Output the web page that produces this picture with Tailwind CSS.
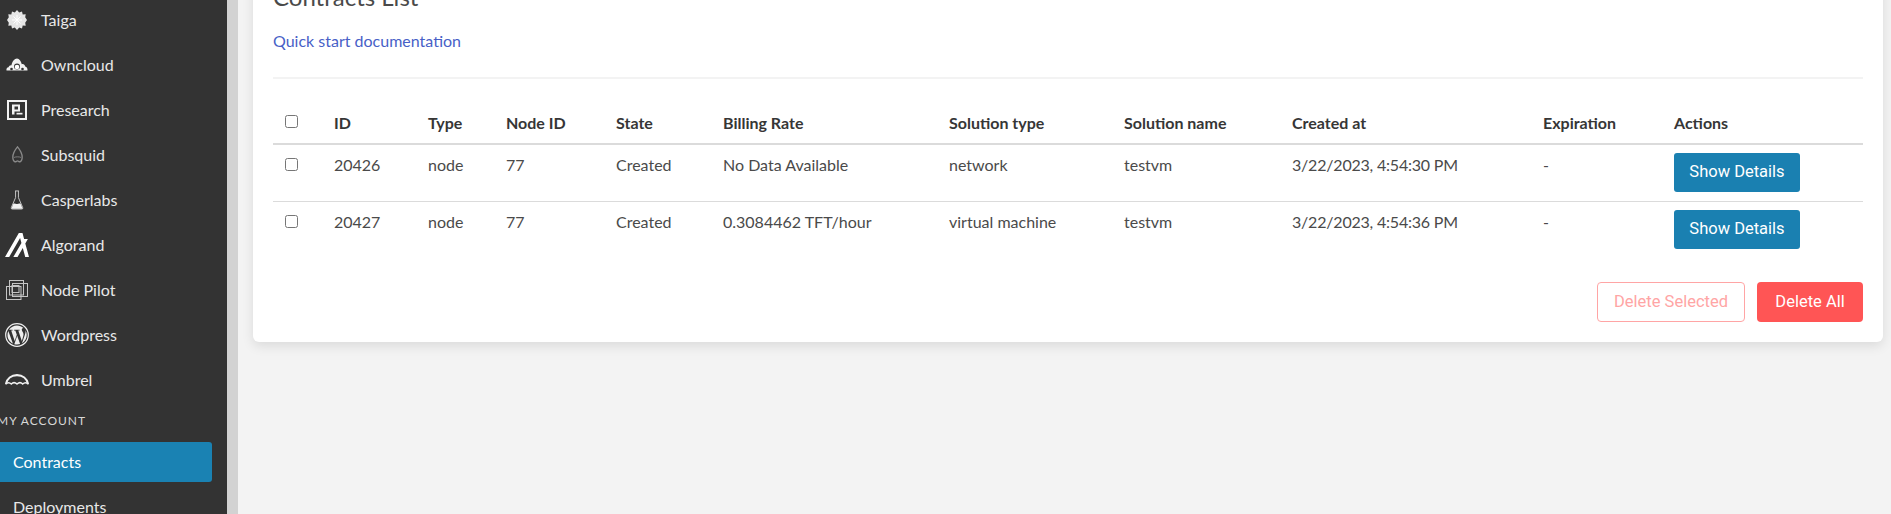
<!doctype html>
<html lang="en">
<head>
<meta charset="utf-8" />
<title>Contracts List</title>
<script src="https://cdn.jsdelivr.net/npm/@tailwindcss/browser@4"></script>
</head>
<body class="bg-[#f3f3f3] font-['Lato',sans-serif] h-screen overflow-hidden">
<div class="flex h-[514px] overflow-hidden">

  <!-- sidebar -->
  <aside class="w-[238px] shrink-0 h-full overflow-hidden bg-[#333333] border-r-[11px] border-[#d2d2d2] text-[#e8e8e8] text-[16px]">
    <nav class="-mt-[3px] flex flex-col">
      <a href="#" class="h-[45px] flex items-center">
        <span class="w-[34px] mr-[7px] flex justify-center">
          <svg width="20" height="20" viewBox="0 0 20 20" fill="#e6e6e6"><path d="M10 0l2.200 2.600L15 1.400l.7 3 3-.1-.5 3L20 10l-1.800 2.700.5 3-3-.1-.7 3-2.800-1.200L10 20l-2.200-2.600L5 18.600l-.7-3-3 .1.500-3L0 10l1.800-2.700-.5-3 3 .1.700-3 2.800 1.200z"/><path d="M10 5v10M5 10h10M6.500 6.500l7 7M13.500 6.500l-7 7" stroke="#fff" stroke-width="1"/></svg>
        </span>Taiga</a>
      <a href="#" class="h-[45px] flex items-center">
        <span class="w-[34px] mr-[7px] flex justify-center">
          <svg width="22" height="13" viewBox="0 0 22 13" fill="#f0f0f0"><path d="M.5 12.500c-.3-1.800.5-3 2-3.200C3 7.800 4.200 7 5.500 7.300 6 3.500 8.500.5 11 .5c2.300 0 4 2.500 4.800 5.700 1.700-.5 3 .6 3.400 2.400 1.500.1 2.500 2 2.300 3.900z"/><circle cx="11" cy="8.500" r="3" fill="#333"/><circle cx="11" cy="9" r="2.300" fill="#fff"/><circle cx="5.500" cy="11" r="1.300" fill="#333"/><circle cx="16.500" cy="11" r="1.300" fill="#333"/></svg>
        </span>Owncloud</a>
      <a href="#" class="h-[45px] flex items-center">
        <span class="w-[34px] mr-[7px] flex justify-center">
          <svg width="20" height="20" viewBox="0 0 20 20"><rect x="1" y="1" width="18" height="18" fill="#333" stroke="#f2f2f2" stroke-width="2"/><path d="M5 4.500h8v7H7.500v3H5z" fill="#f2f2f2"/><rect x="7.500" y="6.500" width="3.500" height="3" fill="#333"/><rect x="9.500" y="12.800" width="6" height="1.700" fill="#f2f2f2"/></svg>
        </span>Presearch</a>
      <a href="#" class="h-[45px] flex items-center">
        <span class="w-[34px] mr-[7px] flex justify-center">
          <svg width="13" height="17" viewBox="0 0 14 20" fill="none" stroke="#8a8a8a" stroke-width="1.600"><path d="M7 1C4.500 4 1.500 9 1.500 13c0 2 .8 5 2.500 5.500 1.200.3 2-1 3-1s1.800 1.300 3 1c1.700-.5 2.500-3.500 2.500-5.500C12.500 9 9.500 4 7 1z"/><path d="M3 13.500c1.500-1 6.500-1 8 0" stroke-width="1"/></svg>
        </span>Subsquid</a>
      <a href="#" class="h-[45px] flex items-center">
        <span class="w-[34px] mr-[7px] flex justify-center">
          <svg width="14" height="20" viewBox="0 0 14 21" fill="none" stroke="#c8c8c8" stroke-width="1"><path d="M5 1h4M5.500 1v7L1 18.500c-.3.800.2 1.500 1 1.500h10c.8 0 1.300-.7 1-1.500L8.500 8V1"/><path d="M3.200 14.500c1.500-1 2.500.6 4 .2s2-.9 3.500-.2l2.300 5.300H1z" fill="#f2f2f2" stroke="none"/></svg>
        </span>Casperlabs</a>
      <a href="#" class="h-[45px] flex items-center">
        <span class="w-[34px] mr-[7px] flex justify-center">
          <svg width="24" height="24" viewBox="0 0 24 24" fill="#fff"><path d="M23.980 23.990h-3.750l-2.440-9.070-5.250 9.070H8.340l8.100-14.040L15.100 5.020 4.200 23.990H.02L13.830 0h3.660l1.600 5.920h3.770l-2.570 4.470 3.690 13.600z"/></svg>
        </span>Algorand</a>
      <a href="#" class="h-[45px] flex items-center">
        <span class="w-[34px] mr-[7px] flex justify-center">
          <svg width="22" height="20" viewBox="0 0 22 20" fill="none" stroke="#c4c4c4" stroke-width="1"><rect x=".5" y="6.500" width="14.500" height="13"/><rect x="3.500" y=".5" width="14" height="14.500"/><rect x="6.500" y="3.500" width="15" height="13"/><rect x="6" y="5.500" width="7" height="7"/></svg>
        </span>Node Pilot</a>
      <a href="#" class="h-[45px] flex items-center">
        <span class="w-[34px] mr-[7px] flex justify-center">
          <svg width="24" height="24" viewBox="0 0 24 24"><circle cx="12" cy="12" r="11.300" fill="none" stroke="#eee" stroke-width="1.200"/><path d="M2.500 12c0 3.800 2.200 7 5.400 8.600L3.300 8.100c-.5 1.200-.8 2.500-.8 3.900zm16-.5c0-1.200-.4-2-.8-2.600-.5-.8-.9-1.400-.9-2.200 0-.8.6-1.600 1.500-1.600h.1C16.700 3.500 14.500 2.500 12 2.500c-3.300 0-6.200 1.700-7.900 4.300h.6c1 0 2.500-.1 2.500-.1.500 0 .6.700.1.800 0 0-.5.100-1.100.1l3.500 10.400 2.100-6.300-1.500-4.100c-.5 0-1-.1-1-.1-.5 0-.5-.8 0-.8 0 0 1.600.1 2.500.1 1 0 2.500-.1 2.500-.1.500 0 .6.700.1.800 0 0-.5.100-1.100.1l3.500 10.300 1-3.200c.4-1.300.7-2.300.7-3.100zm-6.300 1.300l-2.900 8.400c.9.300 1.800.4 2.700.4 1.100 0 2.200-.2 3.200-.5l-.1-.1zm8.300-5.500c0 .3.100.7.100 1 0 1-.2 2.100-.7 3.500l-2.900 8.400c2.800-1.600 4.700-4.700 4.700-8.200 0-1.700-.4-3.300-1.200-4.700z" fill="#eee"/></svg>
        </span>Wordpress</a>
      <a href="#" class="h-[45px] flex items-center">
        <span class="w-[34px] mr-[7px] flex justify-center">
          <svg width="24" height="11" viewBox="0 0 24 11" fill="none" stroke="#f0f0f0" stroke-width="2.200"><path d="M1 10C2 4.500 6.500 1.100 12 1.100S22 4.500 23 10"/><path d="M.5 10.300c2-2 4-2 5.800-.3 1.700-1.700 3.800-1.700 5.700 0 1.900-1.700 4-1.700 5.700 0 1.800-1.700 3.800-1.700 5.800.3" stroke-width="1.500"/></svg>
        </span>Umbrel</a>
    </nav>
    <p class="-ml-[3px] mt-[11px] h-[16px] leading-[16px] text-[12px] tracking-[1px] uppercase text-[#d8d8d8]">My Account</p>
    <div class="mt-[13px] w-[212px] h-[40px] flex items-center pl-[13px] rounded-r-[3px] bg-[#1a82b3] text-white">Contracts</div>
    <a href="#" class="block pl-[13px] mt-[13px] leading-[24px]">Deployments</a>
  </aside>

  <!-- main -->
  <main class="flex-1 min-w-0 pl-[15px] pr-[8px] h-full overflow-hidden">
    <section class="-mt-[40px] bg-white rounded-[6px] shadow-[0_4px_12px_rgba(0,0,0,0.10)] px-[20px] pt-[21px] pb-[20px] text-[#4a4a4a]">
      <h1 class="text-[24px] leading-[32px]">Contracts List</h1>
      <a href="#" class="block mt-[16px] text-[16px] leading-[24px] text-[#485fc7]">Quick start documentation</a>
      <hr class="mt-[24px] h-[2px] border-0 bg-[#f3f3f3]" />

      <table class="mt-[26px] w-[1590px] table-fixed text-[16px] text-left border-collapse">
        <thead class="text-[#363636]">
          <tr class="h-[39px] border-b-2 border-[#dbdbdb] font-bold">
            <th class="w-[49px] px-3 pb-[5px]"><input type="checkbox" class="block" /></th>
            <th class="w-[94px] px-3 pb-[2px]">ID</th>
            <th class="w-[78px] px-3 pb-[2px]">Type</th>
            <th class="w-[110px] px-3 pb-[2px]">Node ID</th>
            <th class="w-[107px] px-3 pb-[2px]">State</th>
            <th class="w-[226px] px-3 pb-[2px]">Billing Rate</th>
            <th class="w-[175px] px-3 pb-[2px]">Solution type</th>
            <th class="w-[168px] px-3 pb-[2px]">Solution name</th>
            <th class="w-[251px] px-3 pb-[2px]">Created at</th>
            <th class="w-[131px] px-3 pb-[2px]">Expiration</th>
            <th class="w-[201px] px-3 pb-[2px]">Actions</th>
          </tr>
        </thead>
        <tbody>
          <tr class="h-[57px] border-b border-[#dbdbdb] align-top">
            <td class="px-3 pt-[13px]"><input type="checkbox" class="block" /></td>
            <td class="px-3 pt-[8px]">20426</td>
            <td class="px-3 pt-[8px]">node</td>
            <td class="px-3 pt-[8px]">77</td>
            <td class="px-3 pt-[8px]">Created</td>
            <td class="px-3 pt-[8px]">No Data Available</td>
            <td class="px-3 pt-[8px]">network</td>
            <td class="px-3 pt-[8px]">testvm</td>
            <td class="px-3 pt-[8px] tracking-[-0.2px]">3/22/2023, 4:54:30 PM</td>
            <td class="px-3 pt-[8px]">-</td>
            <td class="px-3 pt-[8px]"><button class="w-[126px] h-[39px] rounded-[3px] bg-[#1a80b1] text-white text-[16.5px] font-['Roboto',sans-serif]">Show Details</button></td>
          </tr>
          <tr class="h-[57px] align-top">
            <td class="px-3 pt-[13px]"><input type="checkbox" class="block" /></td>
            <td class="px-3 pt-[8px]">20427</td>
            <td class="px-3 pt-[8px]">node</td>
            <td class="px-3 pt-[8px]">77</td>
            <td class="px-3 pt-[8px]">Created</td>
            <td class="px-3 pt-[8px]">0.3084462 TFT/hour</td>
            <td class="px-3 pt-[8px]">virtual machine</td>
            <td class="px-3 pt-[8px]">testvm</td>
            <td class="px-3 pt-[8px] tracking-[-0.2px]">3/22/2023, 4:54:36 PM</td>
            <td class="px-3 pt-[8px]">-</td>
            <td class="px-3 pt-[8px]"><button class="w-[126px] h-[39px] rounded-[3px] bg-[#1a80b1] text-white text-[16.5px] font-['Roboto',sans-serif]">Show Details</button></td>
          </tr>
        </tbody>
      </table>

      <div class="mt-[24px] flex justify-end gap-[12px] font-['Roboto',sans-serif] text-[16.5px]">
        <button class="w-[148px] h-[40px] rounded-[4px] border border-[#ffa5a5] text-[#ffa5a5]">Delete Selected</button>
        <button class="w-[106px] h-[40px] rounded-[4px] bg-[#ff5555] text-white">Delete All</button>
      </div>
    </section>
  </main>
</div>
</body>
</html>
